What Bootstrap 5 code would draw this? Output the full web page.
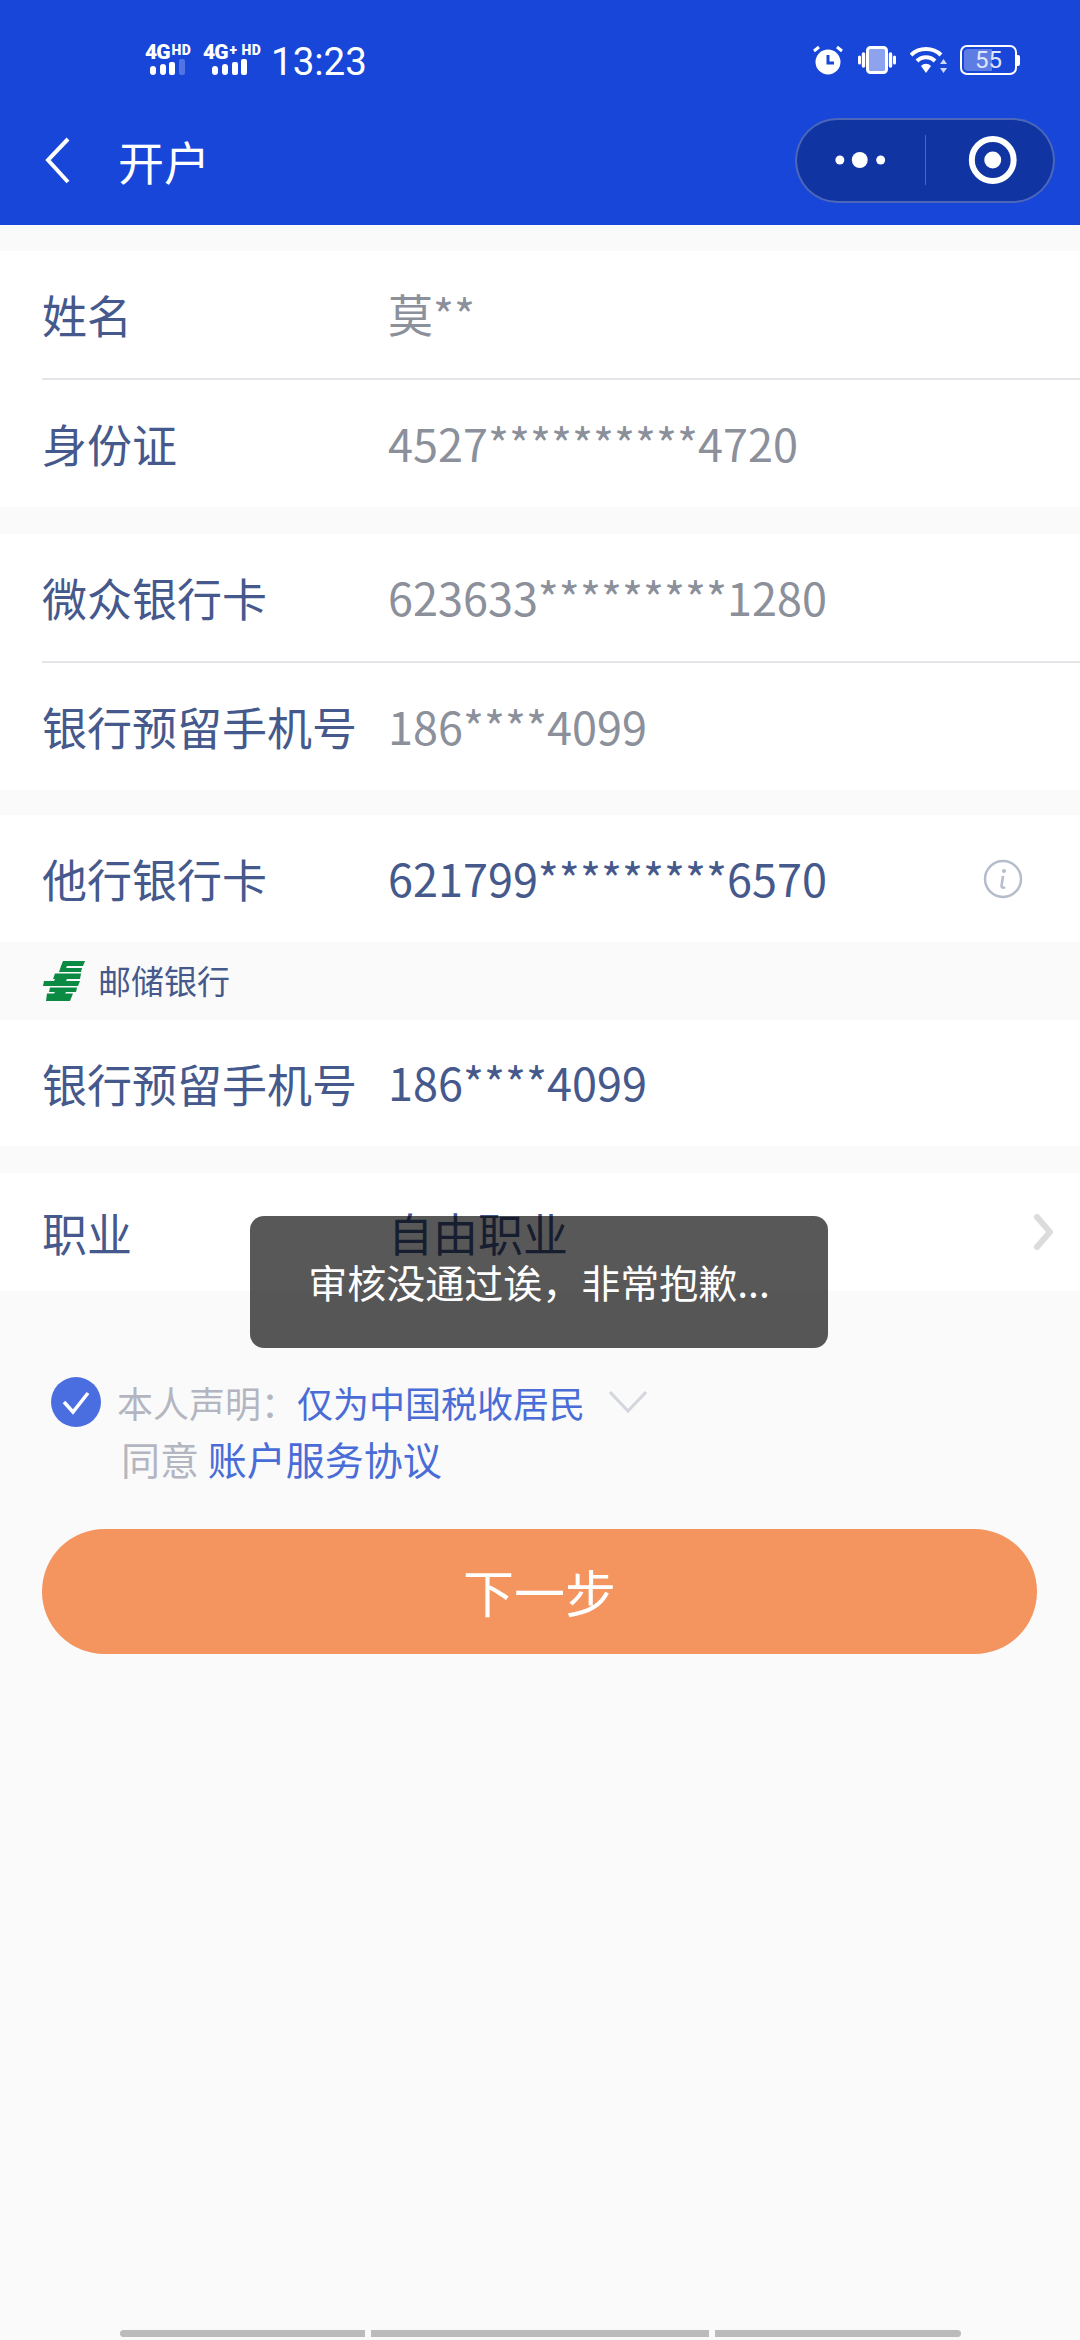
<!DOCTYPE html>
<html lang="zh-CN">
<head>
  <meta charset="UTF-8">
  <meta name="viewport" content="width=device-width, initial-scale=1.0">
  <title>开户</title>
  <link href="https://cdn.jsdelivr.net/npm/bootstrap@5.3.2/dist/css/bootstrap.min.css" rel="stylesheet">
  <style>
    body {
      background: #fafafa;
      font-family: "Noto Sans CJK SC", "Noto Sans", sans-serif;
      color: #45598c;
      width: 1080px;
      min-height: 2340px;
    }
    .app-head { background: #1746d8; height: 225px; color: #fff; }
    .status-bar { height: 112px; padding: 44px 60px 0 145px; font-family: Roboto, sans-serif; }
    .net-item { line-height: 1; font-weight: 900; }
    .net-text { height: 15px; font-size: 21px; line-height: 17px; letter-spacing: -1px; white-space: nowrap; }
    .net-hd { font-size: 14px; line-height: 12px; letter-spacing: .5px; vertical-align: top; margin-left: 2px; display: inline-block; }
    .status-time { font-size: 38.5px; line-height: 34px; margin-top: 1px; }
    .batt-box { width: 57px; height: 30px; border: 2px solid #fff; border-radius: 7px; position: relative; }
    .batt-fill { width: 28px; background: rgba(255,255,255,.3); border-radius: 4px 0 0 4px; margin: 2px; }
    .batt-text { position: absolute; inset: 0; text-align: center; font-size: 24px; line-height: 27px; color: #dfe5fb; }
    .batt-nub { width: 3px; height: 11px; background: #fff; border-radius: 0 2px 2px 0; }
    .status-right { height: 32px; margin-right: 0; }
    .head-title { height: 113px; padding: 0 25px 0 45px; }
    .head-title h1 { font-size: 46px; font-weight: 400; margin: 0 0 0 47px; line-height: 1; padding-bottom: 18px; }
    .back-ico { margin-bottom: 16px; }
    .capsule {
      width: 260px; height: 85px; margin-bottom: 17px; border-radius: 43px;
      background: #1035a2; border: 2px solid rgba(255,255,255,.25);
    }
    .capsule-sep { width: 1px; height: 50px; background: rgba(255,255,255,.25); }
    .form-group-box { background: #fff; margin-bottom: 27px; }
    .form-group-box.tight-gap { margin-bottom: 25px; }
    .form-line { height: 127px; padding-left: 42px; font-size: 45px; line-height: 1; }
    .line-label { width: 346px; flex: none; }
    .line-value { padding-bottom: 3px; }
    .line-value-muted { color: #8b909b; }
    .line-sep { height: 2px; margin-left: 42px; background: #e4e5e8; }
    .bank-strip { height: 78px; padding-left: 43px; font-size: 33px; background: #fafafa; }
    .job-line { height: 118px; }
    .consent { padding: 0 0 0 51px; margin-top: 86px; }
    .consent-grey { color: #b3b6c0; }
    .consent-blue { color: #4a6cd6; }
    .consent-a { font-size: 36px; line-height: 50px; }
    .consent-b { font-size: 39px; line-height: 50px; padding-left: 70px; margin-top: 6px; }
    .next-btn {
      display: block; width: 995px; height: 125px; margin: 46px 0 0 42px; border: 0;
      border-radius: 63px; background: #f4945f; color: #fff; font-size: 51px; line-height: 1;
    }
    .next-btn:hover { background: #f4945f; color: #fff; }
    .toast-msg {
      position: absolute; left: 250px; top: 1216px; width: 578px; height: 132px;
      border-radius: 14px; background: rgba(0,0,0,.655); color: #fff;
      font-size: 39px; line-height: 1; padding-top: 46px; text-align: center;
    }
    .gesture-bar { position: absolute; left: 120px; top: 2330px; width: 841px; height: 7px; gap: 6px; }
    .gesture-bar span { background: #bbb; height: 7px; display: block; }
  </style>
</head>
<body class="position-relative">

<div class="app-head">
  <div class="status-bar d-flex align-items-start">
    <div class="net-item" style="width:58px">
      <div class="net-text">4G<span class="net-hd">HD</span></div>
      <svg width="46" height="16" class="d-block" viewBox="0 0 46 16"><g fill="#fff"><rect x="5" y="7" width="6" height="9" rx="3"/><rect x="15" y="5" width="6" height="11" rx="3"/><rect x="24" y="3" width="6" height="13" rx="2"/><rect x="34" y="0" width="6" height="16" rx="2" opacity=".25"/></g></svg>
    </div>
    <div class="net-item" style="width:68px">
      <div class="net-text">4G<span class="net-hd">+ HD</span></div>
      <svg width="46" height="16" class="d-block" viewBox="0 0 46 16"><g fill="#fff"><rect x="9" y="7" width="6" height="9" rx="3"/><rect x="19" y="5" width="6" height="11" rx="3"/><rect x="29" y="3" width="6" height="13" rx="2"/><rect x="38" y="0" width="6" height="16" rx="2"/></g></svg>
    </div>
    <div class="status-time">13:23</div>
    <div class="status-right ms-auto d-flex align-items-center">
      <svg width="30" height="30" viewBox="0 0 30 30"><circle cx="15" cy="17" r="12.500" fill="#fff"/><path d="M15 10v8h6" fill="none" stroke="#1746d8" stroke-width="3"/><path d="M1 6l5-4M29 6l-5-4" stroke="#fff" stroke-width="3"/></svg>
      <svg style="margin-left:15px" width="38" height="28" viewBox="0 0 38 28"><rect x="9.500" y="1.500" width="19" height="25" rx="3" fill="#8da3ee" stroke="#fff" stroke-width="3"/><path d="M5.500 8v12M32.500 8v12" stroke="#fff" stroke-width="3.500" stroke-linecap="round"/><path d="M1.500 11v6M36.500 11v6" stroke="#fff" stroke-width="3" stroke-linecap="round"/></svg>
      <svg style="margin-left:14px" width="37" height="28" viewBox="0 0 37 28"><g fill="none" stroke="#fff" stroke-width="4"><path d="M1 9c8-8 22-8 30 0"/><path d="M7 15c5-5 13-5 18 0"/></g><path d="M11 20c3-3 7-3 10 0l-5 7z" fill="#fff"/><path d="M33.500 13l3.500 5h-7zM33.500 27l3.500-5h-7z" fill="#cfd9fa"/></svg>
      <div class="batt-box d-flex" style="margin-left:13px"><div class="batt-fill"></div><div class="batt-text">55</div></div>
      <div class="batt-nub"></div>
    </div>
  </div>
  <div class="head-title d-flex align-items-center">
    <svg width="26" height="48" viewBox="0 0 26 48" class="back-ico"><path d="M23 2L3 23l20 22" fill="none" stroke="#fff" stroke-width="4"/></svg>
    <h1>开户</h1>
    <div class="capsule d-flex align-items-center ms-auto">
      <svg width="128" height="30" viewBox="0 0 128 30"><g fill="#fff"><circle cx="43" cy="15" r="4.500"/><circle cx="63" cy="15" r="8"/><circle cx="84" cy="15" r="4.500"/></g></svg>
      <div class="capsule-sep"></div>
      <svg width="128" height="54" viewBox="0 0 128 54"><circle cx="67" cy="27" r="21" fill="none" stroke="#fff" stroke-width="6"/><circle cx="67" cy="27" r="8.500" fill="#fff"/></svg>
    </div>
  </div>
</div>

<div class="form-group-box" style="margin-top:26px">
  <div class="form-line d-flex align-items-center"><div class="line-label">姓名</div><div class="line-value line-value-muted">莫**</div></div>
  <div class="line-sep"></div>
  <div class="form-line d-flex align-items-center"><div class="line-label">身份证</div><div class="line-value line-value-muted">4527**********4720</div></div>
</div>

<div class="form-group-box tight-gap">
  <div class="form-line d-flex align-items-center"><div class="line-label">微众银行卡</div><div class="line-value line-value-muted">623633*********1280</div></div>
  <div class="line-sep"></div>
  <div class="form-line d-flex align-items-center"><div class="line-label">银行预留手机号</div><div class="line-value line-value-muted">186****4099</div></div>
</div>

<div class="form-group-box">
  <div class="form-line d-flex align-items-center">
    <div class="line-label">他行银行卡</div><div class="line-value">621799*********6570</div>
    <svg class="ms-auto" style="margin-right:57px" width="40" height="40" viewBox="0 0 40 40"><circle cx="20" cy="20" r="18" fill="none" stroke="#b5bccb" stroke-width="2.500"/><circle cx="21" cy="12" r="2" fill="#b5bccb"/><path d="M20 17l-1.500 10c0 2 2 2 3.500 1" fill="none" stroke="#b5bccb" stroke-width="2.500"/></svg>
  </div>
  <div class="bank-strip d-flex align-items-center">
    <svg width="42" height="40" viewBox="0 0 42 40"><g fill="#0b8a44"><path d="M20 0H42L40 5H24L23 7H39L38 11H16L18 5z"/><path d="M12 12.500H38L37 18H24L23 20H37L35 25H0L1 20H11L12 18H10z"/><path d="M7 26.500H34L33 31H23L22 32.500H30L27 40H3L4 32.500H11L12 31H6z"/></g></svg>
    <span style="margin-left:13px">邮储银行</span>
  </div>
  <div class="form-line d-flex align-items-center" style="height:126px"><div class="line-label">银行预留手机号</div><div class="line-value">186****4099</div></div>
</div>

<div class="form-group-box">
  <div class="form-line job-line d-flex align-items-center">
    <div class="line-label">职业</div><div>自由职业</div>
    <svg class="ms-auto" style="margin-right:25px" width="22" height="38" viewBox="0 0 22 38"><path d="M4 4l13 15L4 34" fill="none" stroke="#dcdcdc" stroke-width="6" stroke-linecap="round" stroke-linejoin="round"/></svg>
  </div>
</div>

<div class="consent">
  <div class="consent-a d-flex align-items-center">
    <svg class="me-3" width="50" height="50" viewBox="0 0 50 50"><circle cx="25" cy="25" r="25" fill="#4a6ee0"/><path d="M13 25l9 10 15-19" fill="none" stroke="#fff" stroke-width="3.500"/></svg>
    <span class="consent-grey">本人声明：</span><span class="consent-blue">仅为中国税收居民</span>
    <svg style="margin-left:24px" width="38" height="22" viewBox="0 0 38 22"><path d="M1 1l18 19L37 1" fill="none" stroke="#d3d6dc" stroke-width="3"/></svg>
  </div>
  <div class="consent-b"><span class="consent-grey">同意</span> <span class="consent-blue">账户服务协议</span></div>
</div>

<button class="btn next-btn" type="button">下一步</button>

<div class="toast-msg">审核没通过诶，非常抱歉...</div>

<div class="gesture-bar d-flex">
  <span class="rounded-start-pill" style="width:245px"></span>
  <span style="width:338px"></span>
  <span class="rounded-end-pill" style="width:246px"></span>
</div>

<script src="https://cdn.jsdelivr.net/npm/bootstrap@5.3.2/dist/js/bootstrap.bundle.min.js"></script>
</body>
</html>
